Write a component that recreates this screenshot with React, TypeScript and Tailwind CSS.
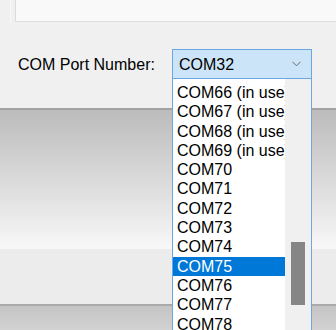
import React from "react";

const ports = [
  "COM66 (in use)",
  "COM67 (in use)",
  "COM68 (in use)",
  "COM69 (in use)",
  "COM70",
  "COM71",
  "COM72",
  "COM73",
  "COM74",
  "COM75",
  "COM76",
  "COM77",
  "COM78",
  "COM79",
];

const selected = "COM75";

const App: React.FC = () => {
  return (
    <div
      className="relative w-[336px] h-[330px] overflow-hidden bg-[#f0f0f0] text-black"
      style={{ fontFamily: '"Liberation Sans", Arial, sans-serif' }}
    >
      {/* top group panel */}
      <div className="h-[22px] pl-[10px]">
        <div className="h-full pl-[4px] border-l border-[#f7f7f7]">
          <div className="h-full border-l border-b border-[#dcdcdc] bg-[#f9f9f9]" />
        </div>
      </div>

      {/* form row */}
      <div className="h-[86px] pt-[27px]">
        <div className="flex items-center">
          <span className="ml-[18px] w-[154px] text-[16px] leading-[19px]">COM Port Number:</span>
          <div className="relative">
            <div className="w-[140px] h-[30px] flex items-center justify-between border border-[#6aa7e3] bg-[#cce4f7] pl-[6px] pr-[10px]">
              <span className="text-[16px] leading-[19px]">COM32</span>
              <svg width="9" height="6" viewBox="0 0 9 6" fill="none">
                <path d="M0.5 0.8 L4.5 4.8 L8.5 0.8" stroke="#6b6b6b" strokeWidth="1" />
              </svg>
            </div>

            {/* open dropdown list */}
            <div className="absolute left-0 top-[30px] z-10 w-[140px] h-[260px] flex border-l border-r border-[#6aa7e3] bg-white">
              <div className="w-[112px] pt-[4px]">
                {ports.map((p) => (
                  <div
                    key={p}
                    className={
                      "h-[19.3px] pl-[4px] text-[16px] leading-[19.3px] whitespace-nowrap overflow-hidden " +
                      (p === selected ? "bg-[#0078d7] text-white" : "text-black")
                    }
                  >
                    {p}
                  </div>
                ))}
              </div>
              <div className="w-[26px] bg-[#f0f0f0] pt-[163px] pl-[6px]">
                <div className="w-[14px] h-[63px] bg-[#868686]" />
              </div>
            </div>
          </div>
        </div>
      </div>

      {/* lower bands */}
      <div className="h-[2px] bg-[#a2a2a2]" />
      <div className="h-[139px] bg-gradient-to-b from-[#bcbcbc] to-[#f8f8f8]" />
      <div className="h-[55px] bg-[#ececec]" />
      <div className="h-[2px] bg-[#aaaaaa]" />
      <div className="h-[30px] bg-gradient-to-b from-[#c4c4c4] to-[#d6d6d6]" />
    </div>
  );
};

export default App;
